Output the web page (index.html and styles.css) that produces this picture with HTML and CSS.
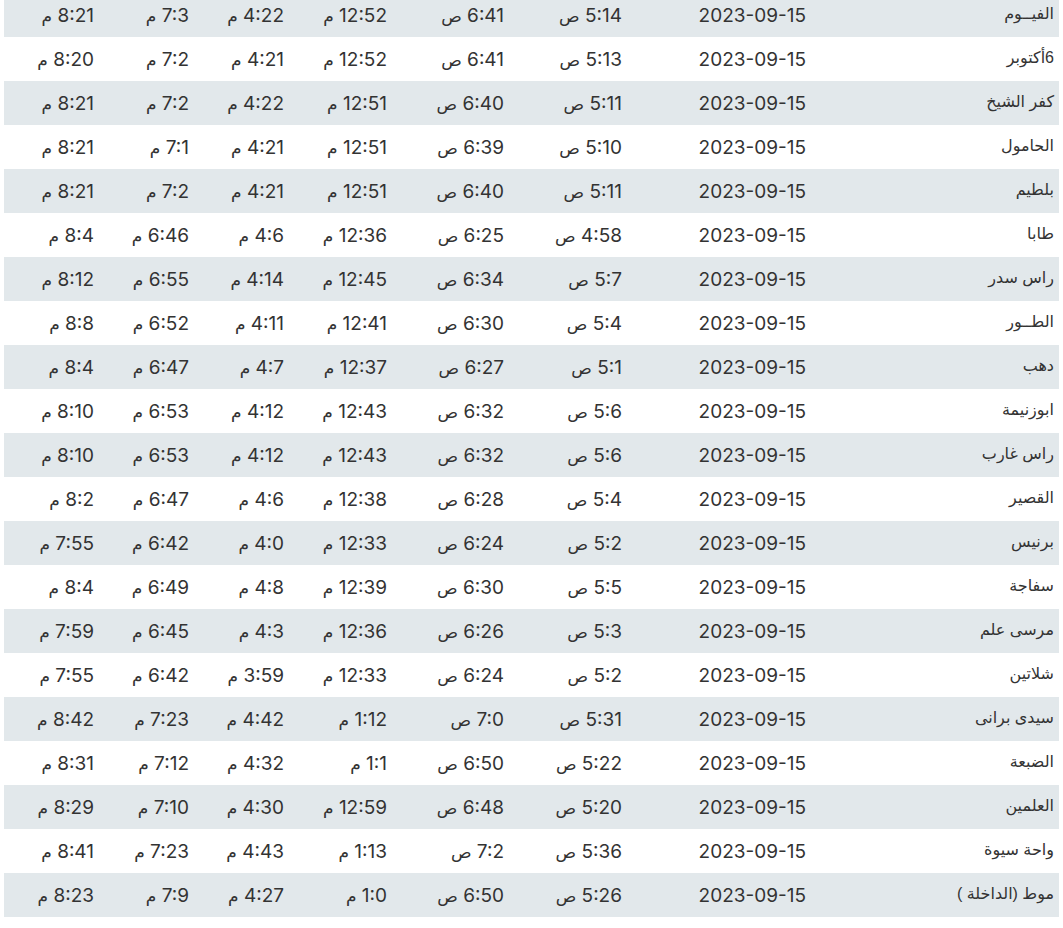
FILE: index.html
```html
<!DOCTYPE html>
<html lang="ar" dir="rtl">
<head>
    <meta charset="UTF-8">
    <meta name="viewport" content="width=device-width, initial-scale=1.0">
    <title>مواعيد الصلاة</title>
    <link rel="stylesheet" href="styles.css">
</head>
<body>
    <div class="wrap">
        <table class="prayer-table">
            <colgroup>
                <col class="c-city">
                <col class="c-date">
                <col class="c-fajr">
                <col class="c-sunrise">
                <col class="c-dhuhr">
                <col class="c-asr">
                <col class="c-maghrib">
                <col class="c-isha">
            </colgroup>
            <tbody id="tableBody"></tbody>
        </table>
    </div>

    <script>
        const rows = [
            ['الفيــوم', '5:14', '6:41', '12:52', '4:22', '7:3', '8:21'],
            ['6أكتوبر', '5:13', '6:41', '12:52', '4:21', '7:2', '8:20'],
            ['كفر الشيخ', '5:11', '6:40', '12:51', '4:22', '7:2', '8:21'],
            ['الحامول', '5:10', '6:39', '12:51', '4:21', '7:1', '8:21'],
            ['بلطيم', '5:11', '6:40', '12:51', '4:21', '7:2', '8:21'],
            ['طابا', '4:58', '6:25', '12:36', '4:6', '6:46', '8:4'],
            ['راس سدر', '5:7', '6:34', '12:45', '4:14', '6:55', '8:12'],
            ['الطــور', '5:4', '6:30', '12:41', '4:11', '6:52', '8:8'],
            ['دهب', '5:1', '6:27', '12:37', '4:7', '6:47', '8:4'],
            ['ابوزنيمة', '5:6', '6:32', '12:43', '4:12', '6:53', '8:10'],
            ['راس غارب', '5:6', '6:32', '12:43', '4:12', '6:53', '8:10'],
            ['القصير', '5:4', '6:28', '12:38', '4:6', '6:47', '8:2'],
            ['برنيس', '5:2', '6:24', '12:33', '4:0', '6:42', '7:55'],
            ['سفاجة', '5:5', '6:30', '12:39', '4:8', '6:49', '8:4'],
            ['مرسى علم', '5:3', '6:26', '12:36', '4:3', '6:45', '7:59'],
            ['شلاتين', '5:2', '6:24', '12:33', '3:59', '6:42', '7:55'],
            ['سيدى برانى', '5:31', '7:0', '1:12', '4:42', '7:23', '8:42'],
            ['الضبعة', '5:22', '6:50', '1:1', '4:32', '7:12', '8:31'],
            ['العلمين', '5:20', '6:48', '12:59', '4:30', '7:10', '8:29'],
            ['واحة سيوة', '5:36', '7:2', '1:13', '4:43', '7:23', '8:41'],
            ['موط (الداخلة )', '5:26', '6:50', '1:0', '4:27', '7:9', '8:23']
        ];

        // fajr and sunrise are morning (ص), the rest evening (م)
        const suffix = ['ص', 'ص', 'م', 'م', 'م', 'م'];

        const tableBody = document.getElementById('tableBody');
        rows.forEach(([city, ...times]) => {
            const row = document.createElement('tr');
            row.innerHTML = `
                <td class="city">${city}</td>
                <td>2023-09-15</td>
                ${times.map((t, i) => `<td>${t} <span class="ampm">${suffix[i]}</span></td>`).join('')}
            `;
            tableBody.appendChild(row);
        });
    </script>
</body>
</html>
```

FILE: styles.css
```css
body, html {
    margin: 0;
    padding: 0;
    background: #fff;
    color: #333;
    font-family: 'Inter', 'DejaVu Sans', sans-serif;
}

.wrap {
    padding: 0 4px;
    overflow: hidden;
}

.prayer-table {
    width: 1055px;
    margin-top: -7px;
    border-collapse: collapse;
    table-layout: fixed;
}

.c-city { width: 248px; }
.c-date { width: 184px; }
.c-fajr { width: 118px; }
.c-sunrise { width: 117px; }
.c-dhuhr { width: 103px; }
.c-asr { width: 95px; }
.c-maghrib { width: 95px; }
.c-isha { width: 95px; }

.prayer-table td {
    height: 44px;
    padding: 0 5px;
    text-align: right;
    vertical-align: middle;
    font-size: 19px;
    white-space: nowrap;
}

.prayer-table tr:nth-child(odd) {
    background-color: #e2e8eb;
}

.prayer-table td.city {
    font-family: 'Liberation Sans', 'DejaVu Sans', sans-serif;
    font-size: 16px;
    height: 40px;
    padding-bottom: 4px;
}

.ampm {
    font-size: 17px;
}
```
